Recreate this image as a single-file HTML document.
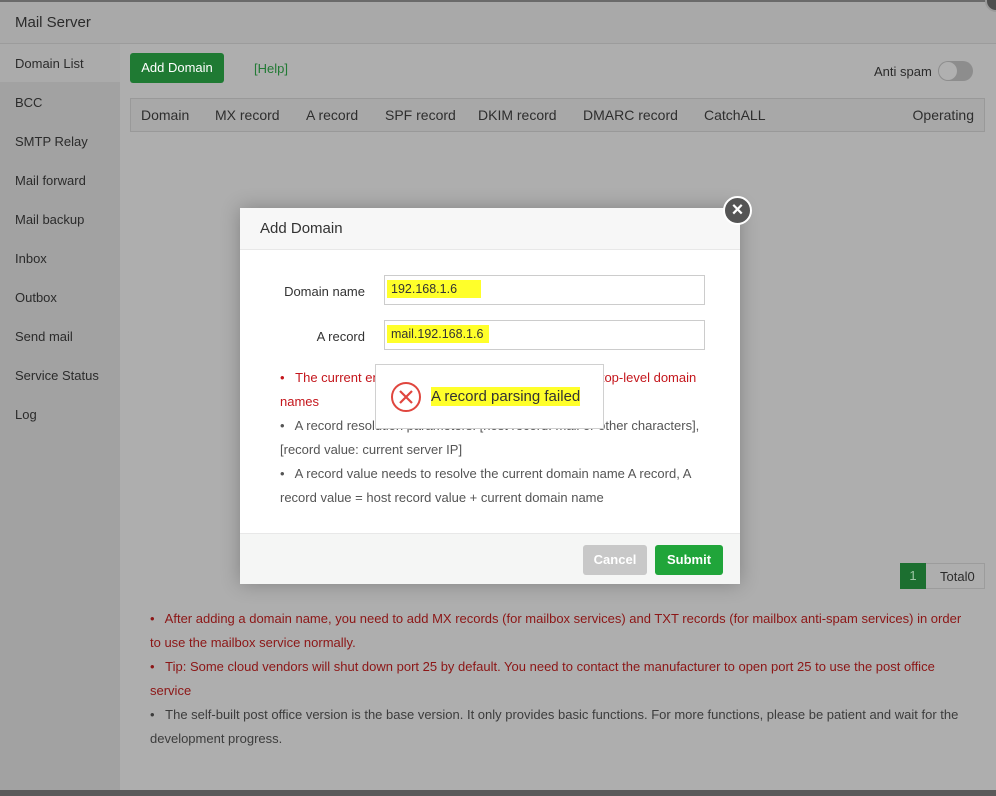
<!DOCTYPE html>
<html><head><meta charset="utf-8"><style>
*{box-sizing:border-box;margin:0;padding:0}
body{width:996px;height:796px;overflow:hidden;background:#aeaeae;font-family:"Liberation Sans",sans-serif;position:relative;color:#333}
.abs{position:absolute}
.hdr{left:0;top:0;width:996px;height:44px;background:#a9a9a9;border-top:2px solid #6a6a6a;border-bottom:1px solid #9c9c9c}
.side{left:0;top:44px;width:120px;height:746px;background:#a2a2a2}
.sel{left:0;top:44px;width:120px;height:38px;background:#ababab}
.bottom{left:0;top:790px;width:996px;height:6px;background:#5a5a5a}
.modal{left:240px;top:208px;width:500px;height:376px;background:#fff;box-shadow:0 0 18px rgba(0,0,0,.25)}
.mh{height:42px;background:#f7f7f7;border-bottom:1px solid #e8e8e8;font-size:15px;padding:12px 20px;color:#333}
.lab{font-size:13px;color:#333;text-align:right;width:125px;left:0}
.inp{left:144px;width:321px;height:30px;border:1px solid #ccc;font-size:12.5px;padding:6px 6px}
.hl{background:#ffff2a}
.note{left:40px;width:425px;font-size:13px;line-height:24px;color:#555}
.foot{left:0;top:325px;width:500px;height:51px;background:#f5f6f5;border-top:1px solid #e8e8e8}
.btn{height:30px;border-radius:3px;color:#fff;font-weight:bold;font-size:13px;text-align:center;line-height:30px}
.bn{font-size:13px;line-height:24px;color:#8c1616}
</style></head><body>
<div class="abs hdr"><div class="abs" style="left:15px;top:12px;font-size:15px;color:#2b2b2b">Mail Server</div></div>
<div class="abs side"></div>
<div class="abs sel"></div>
<div class="abs" style="left:0;top:0;width:120px;height:796px">
<div class="abs" style="left:15px;top:56px;font-size:13px;color:#2b2b2b">Domain List</div>
<div class="abs" style="left:15px;top:95px;font-size:13px;color:#2b2b2b">BCC</div>
<div class="abs" style="left:15px;top:134px;font-size:13px;color:#2b2b2b">SMTP Relay</div>
<div class="abs" style="left:15px;top:173px;font-size:13px;color:#2b2b2b">Mail forward</div>
<div class="abs" style="left:15px;top:212px;font-size:13px;color:#2b2b2b">Mail backup</div>
<div class="abs" style="left:15px;top:251px;font-size:13px;color:#2b2b2b">Inbox</div>
<div class="abs" style="left:15px;top:290px;font-size:13px;color:#2b2b2b">Outbox</div>
<div class="abs" style="left:15px;top:329px;font-size:13px;color:#2b2b2b">Send mail</div>
<div class="abs" style="left:15px;top:368px;font-size:13px;color:#2b2b2b">Service Status</div>
<div class="abs" style="left:15px;top:407px;font-size:13px;color:#2b2b2b">Log</div>
</div>
<div class="abs" style="left:985px;top:-10px;width:22px;height:22px;border-radius:50%;background:#4e4e4e;border:2px solid #9a9a9a"></div>
<div class="abs btn" style="left:130px;top:53px;width:94px;background:#1f7a33;font-weight:normal">Add Domain</div>
<div class="abs" style="left:254px;top:61px;font-size:13px;color:#237a35">[Help]</div>
<div class="abs" style="left:874px;top:64px;font-size:13px;color:#2b2b2b">Anti spam</div>
<div class="abs" style="left:938px;top:61px;width:35px;height:20px;border-radius:10px;background:#8d8d8d"><div class="abs" style="left:1px;top:1px;width:18px;height:18px;border-radius:50%;background:#b0b0b0"></div></div>
<div class="abs" style="left:130px;top:98px;width:855px;height:34px;background:#a8a8a8;border:1px solid #999;font-size:14px;color:#2e2e2e">
<span class="abs" style="left:10px;top:8px">Domain</span><span class="abs" style="left:84px;top:8px">MX record</span><span class="abs" style="left:175px;top:8px">A record</span><span class="abs" style="left:254px;top:8px">SPF record</span><span class="abs" style="left:347px;top:8px">DKIM record</span><span class="abs" style="left:452px;top:8px">DMARC record</span><span class="abs" style="left:573px;top:8px">CatchALL</span><span class="abs" style="right:10px;top:8px">Operating</span></div>
<div class="abs" style="left:900px;top:563px;width:85px;height:26px;border:1px solid #9c9c9c;font-size:13px">
<div class="abs" style="left:-1px;top:-1px;width:26px;height:26px;background:#1c6f30;color:#9ec6a6;text-align:center;line-height:26px">1</div>
<div class="abs" style="left:39px;top:5px;color:#2b2b2b">Total0</div></div>
<div class="abs" style="left:150px;top:607px;width:820px">
<div class="bn">•&nbsp;&nbsp; After adding a domain name, you need to add MX records (for mailbox services) and TXT records (for mailbox anti-spam services) in order to use the mailbox service normally.</div>
<div class="bn">•&nbsp;&nbsp; Tip: Some cloud vendors will shut down port 25 by default. You need to contact the manufacturer to open port 25 to use the post office service</div>
<div class="bn" style="color:#3c3c3c">•&nbsp;&nbsp; The self-built post office version is the base version. It only provides basic functions. For more functions, please be patient and wait for the development progress.</div>
</div>
<div class="abs bottom"></div>

<div class="abs modal">
<div class="mh">Add Domain</div>
<div class="abs lab" style="top:76px">Domain name</div>
<div class="abs inp" style="top:67px"><span class="hl" style="padding:2px 24px 2px 4px;margin-left:-4px">192.168.1.6</span></div>
<div class="abs lab" style="top:121px">A record</div>
<div class="abs inp" style="top:112px"><span class="hl" style="padding:2px 6px 2px 4px;margin-left:-4px">mail.192.168.1.6</span></div>
<div class="abs note" style="top:158px;color:#c4161c">•&nbsp;&nbsp; The current environment does not support binding of top-level domain names</div>
<div class="abs note" style="top:206px">•&nbsp;&nbsp; A record resolution parameters: [host record: mail or other characters], [record value: current server IP]</div>
<div class="abs note" style="top:254px">•&nbsp;&nbsp; A record value needs to resolve the current domain name A record, A record value = host record value + current domain name</div>
<div class="abs foot">
<div class="abs btn" style="left:343px;top:11px;width:64px;background:#c8c8c8">Cancel</div>
<div class="abs btn" style="left:415px;top:11px;width:68px;background:#20a53a">Submit</div>
</div>
</div>
<div class="abs" style="left:375px;top:364px;width:229px;height:65px;background:#fff;border:1px solid #d0d0d0">
<svg class="abs" style="left:14px;top:16px" width="32" height="32" viewBox="0 0 32 32"><circle cx="16" cy="16" r="14" fill="none" stroke="#e0463e" stroke-width="2"/><path d="M10 10L22 22M22 10L10 22" stroke="#e0463e" stroke-width="2.2"/></svg>
<div class="abs" style="left:55px;top:23px;font-size:15px;color:#333"><span class="hl" style="padding:1px 0">A record parsing failed</span></div>
</div>
<div class="abs" style="left:723px;top:196px;width:29px;height:29px;border-radius:50%;background:#555;border:2px solid #fff;color:#fff;text-align:center;line-height:24px;font-size:20px;font-weight:bold">×</div>
</body></html>
